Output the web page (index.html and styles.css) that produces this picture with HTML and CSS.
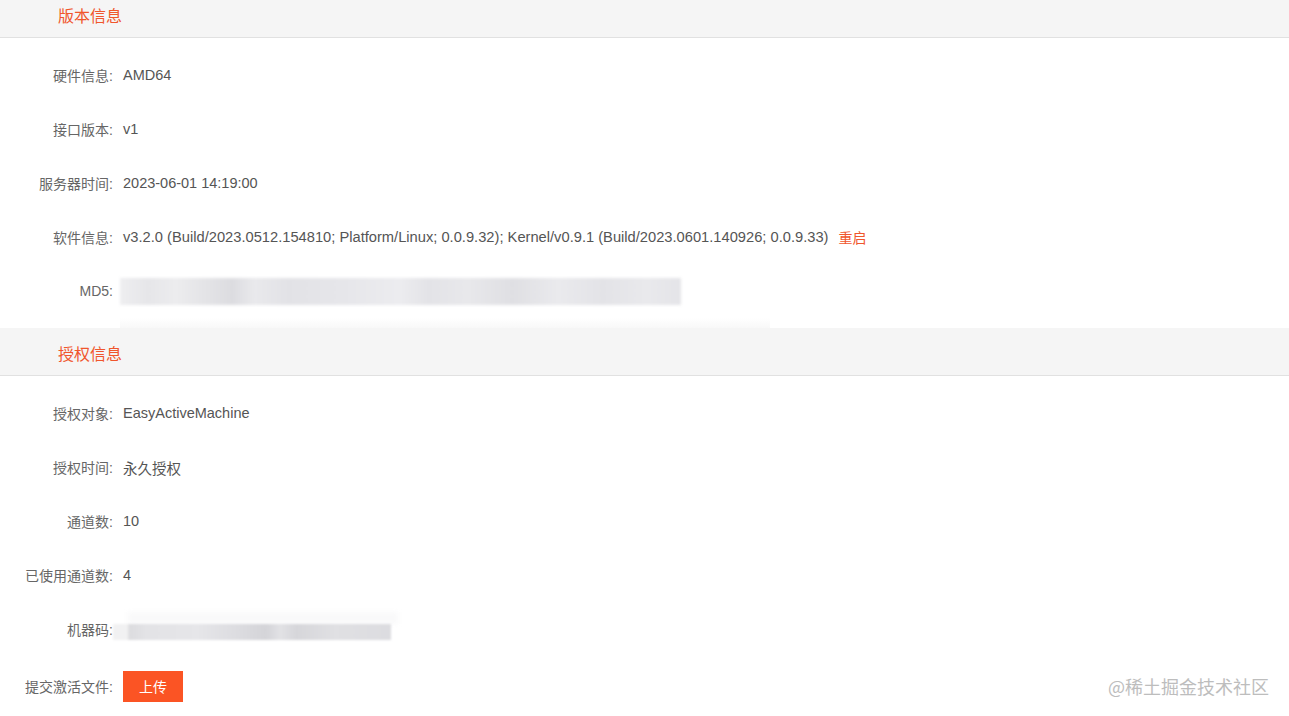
FILE: index.html
```html
<!DOCTYPE html>
<html lang="zh">
<head>
<meta charset="utf-8">
<title>版本信息</title>
<link rel="stylesheet" href="styles.css">
</head>
<body>
<div class="page">
  <section class="section">
    <div class="section-head"><span class="section-title">版本信息</span></div>
    <div class="section-body">
      <div class="row"><span class="label">硬件信息:</span><span class="value">AMD64</span></div>
      <div class="row"><span class="label">接口版本:</span><span class="value">v1</span></div>
      <div class="row"><span class="label">服务器时间:</span><span class="value">2023-06-01 14:19:00</span></div>
      <div class="row"><span class="label">软件信息:</span><span class="value value-long">v3.2.0 (Build/2023.0512.154810; Platform/Linux; 0.0.9.32); Kernel/v0.9.1 (Build/2023.0601.140926; 0.0.9.33)</span><a class="link">重启</a></div>
      <div class="row"><span class="label">MD5:</span><span class="blur blur-md5"></span></div>
      <div class="fade-strip"></div>
    </div>
  </section>
  <section class="section">
    <div class="section-head"><span class="section-title">授权信息</span></div>
    <div class="section-body">
      <div class="row"><span class="label">授权对象:</span><span class="value">EasyActiveMachine</span></div>
      <div class="row"><span class="label">授权时间:</span><span class="value">永久授权</span></div>
      <div class="row"><span class="label">通道数:</span><span class="value">10</span></div>
      <div class="row"><span class="label">已使用通道数:</span><span class="value">4</span></div>
      <div class="row"><span class="label">机器码:</span><span class="blur-machine"><span class="blur-m-top"></span><span class="blur-m-bar"></span></span></div>
      <div class="row row-btn"><span class="label">提交激活文件:</span><button class="btn">上传</button></div>
    </div>
  </section>
  <div class="watermark">@稀土掘金技术社区</div>
</div>
</body>
</html>
```

FILE: styles.css
```css
html, body {
  margin: 0;
  padding: 0;
  background: #ffffff;
}
body {
  font-family: "Liberation Sans", "Noto Sans CJK SC", sans-serif;
  font-size: 14px;
  color: #555555;
  overflow: hidden;
}
.page {
  margin-top: -10px;
  height: 726px;
  position: relative;
}
.section-head {
  height: 47px;
  background: #f5f5f5;
  border-bottom: 1px solid #e1e1e1;
  display: flex;
  align-items: center;
  padding-left: 58px;
}
.section-title {
  font-size: 16px;
  color: #f0562c;
  padding-top: 2px;
}
.section-body {
  padding-top: 10px;
}
.row {
  height: 54px;
  display: flex;
  align-items: center;
}
.label {
  width: 113px;
  text-align: right;
  color: #666666;
  font-size: 14px;
  flex-shrink: 0;
  white-space: nowrap;
}
.value {
  margin-left: 10px;
  color: #555555;
  font-size: 14.5px;
  white-space: nowrap;
}
.value-long {
  font-size: 14.7px;
}
.link {
  margin-left: 10px;
  color: #f0562c;
  font-size: 14px;
  cursor: pointer;
}
.blur {
  display: block;
  margin-left: 7px;
}
.blur-md5 {
  width: 561px;
  height: 27px;
  background: linear-gradient(90deg,
    #eeeef0 0%, #e6e6e9 5%, #ececee 10%, #dcdce0 20%, #e9e9ec 24%,
    #e2e2e6 30%, #e6e6ea 40%, #ececef 50%, #e3e3e7 55%, #e8e8eb 62%,
    #dfdfe3 70%, #eaeaed 78%, #e3e3e7 86%, #e9e9ec 94%, #e4e4e8 100%);
  filter: blur(1.5px);
}
.fade-strip {
  height: 10px;
  margin-left: 120px;
  width: 650px;
  background: linear-gradient(180deg, #ffffff, #f8f8f8);
}
.blur-machine {
  display: flex;
  flex-direction: column;
  margin-top: -6px;
}
.blur-m-top {
  display: block;
  width: 270px;
  height: 12px;
  margin-left: 15px;
  background: #f9f9fa;
  filter: blur(2px);
}
.blur-m-bar {
  display: block;
  width: 278px;
  height: 16px;
  background: linear-gradient(90deg,
    #f1f1f2 0%, #f1f1f2 5%, #dcdcdf 6%, #e3e3e6 12%, #e6e6e9 30%,
    #dcdce0 45%, #d4d4d8 55%, #e2e2e5 60%, #d6d6da 66%, #e0e0e3 80%, #dcdce0 100%);
  filter: blur(1px);
}
.row-btn {
  height: 60px;
}
.btn {
  margin-left: 10px;
  width: 60px;
  height: 31px;
  border: none;
  background: #fb5424;
  color: #ffffff;
  font-family: "Liberation Sans", "Noto Sans CJK SC", sans-serif;
  font-size: 14px;
  padding: 0;
  cursor: pointer;
}
.watermark {
  position: absolute;
  right: 20px;
  bottom: 17px;
  font-size: 18px;
  color: #bdbdbd;
  font-family: "Noto Sans CJK SC", sans-serif;
}
```
